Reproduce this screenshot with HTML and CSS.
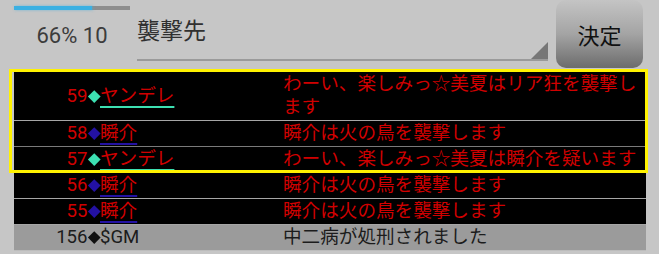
FILE: index.html
```html
<!DOCTYPE html>
<html lang="ja">
<head>
    <meta charset="UTF-8">
    <meta name="viewport" content="width=device-width, initial-scale=1.0">
    <title>襲撃先</title>
    <link rel="stylesheet" href="styles.css">
</head>
<body>
    <div class="top">
        <div class="status">
            <div class="progress"><div class="progress-fill" style="width: 67%"></div></div>
            <div class="count">66% 10</div>
        </div>
        <div class="target">
            <span class="target-text">襲撃先</span>
            <span class="target-arrow"></span>
        </div>
        <button class="decide">決定</button>
    </div>

    <div class="log">
        <div class="focus">
            <div class="row">
                <div class="who"><span class="no">59<i class="mark teal"></i></span><span class="name teal">ヤンデレ</span></div>
                <div class="msg">わーい、楽しみっ☆美夏はリア狂を襲撃します</div>
            </div>
            <div class="row dark-line">
                <div class="who"><span class="no">58<i class="mark blue"></i></span><span class="name blue">瞬介</span></div>
                <div class="msg">瞬介は火の鳥を襲撃します</div>
            </div>
            <div class="row">
                <div class="who"><span class="no">57<i class="mark teal"></i></span><span class="name teal">ヤンデレ</span></div>
                <div class="msg">わーい、楽しみっ☆美夏は瞬介を疑います</div>
            </div>
        </div>
        <div class="row">
            <div class="who"><span class="no">56<i class="mark blue"></i></span><span class="name blue">瞬介</span></div>
            <div class="msg">瞬介は火の鳥を襲撃します</div>
        </div>
        <div class="row">
            <div class="who"><span class="no">55<i class="mark blue"></i></span><span class="name blue">瞬介</span></div>
            <div class="msg">瞬介は火の鳥を襲撃します</div>
        </div>
        <div class="row sys">
            <div class="who"><span class="no">156<i class="mark"></i></span><span>$GM</span></div>
            <div class="msg">中二病が処刑されました</div>
        </div>
    </div>
</body>
</html>
```

FILE: styles.css
```css
body {
    margin: 0;
    background-color: #c6c6c6;
    font-family: Roboto, "Noto Sans CJK JP", sans-serif;
    overflow: hidden;
}
.top {
    display: flex;
    height: 69px;
}
.status {
    width: 116px;
    margin-left: 14px;
    padding-top: 6px;
}
.progress {
    height: 4px;
    background-color: #8e8e8e;
}
.progress-fill {
    height: 100%;
    background-color: #3cb0e2;
    box-shadow: 1px 0 3px rgba(60,176,226,0.6);
}
.count {
    margin-top: 13px;
    font-size: 22px;
    line-height: 26px;
    text-align: center;
    color: #3c3c3c;
}
.target {
    display: flex;
    justify-content: space-between;
    width: 411px;
    height: 59px;
    margin-left: 7px;
    border-bottom: 2px solid #9a9a9a;
}
.target-text {
    padding-top: 18px;
    font-size: 23px;
    line-height: 28px;
    color: #303030;
}
.target-arrow {
    align-self: flex-end;
    width: 0;
    height: 0;
    border-left: 17px solid transparent;
    border-bottom: 17px solid #777;
}
.decide {
    width: 87px;
    height: 68px;
    margin-left: 8px;
    padding: 0;
    border: none;
    border-radius: 10px;
    background: linear-gradient(#c4c4c4, #a4a4a4 50%, #6c6c6c);
    font-family: inherit;
    font-size: 22px;
    color: #111;
}
.log {
    margin: 0 13px 0 14px;
    background-color: #9b9b9b;
}
.focus {
    margin: 0 -2px 0 -5px;
    padding: 3px 2px 0 5px;
    background-color: #c6c6c6;
    outline: 3px solid #fff200;
    outline-offset: -3px;
}
.row {
    display: grid;
    grid-template-columns: 269px 1fr;
    align-items: center;
    padding: 1px 0;
    background-color: #000;
    border-bottom: 1px solid #a6a6a6;
    color: #d00000;
    font-size: 18.6px;
    line-height: 23px;
}
.row.dark-line {
    border-bottom-color: #7a7a7a;
}
.row.sys {
    background-color: #9b9b9b;
    border-bottom-color: #bcbcbc;
    color: #1c1c1c;
}
.who {
    display: flex;
    align-items: center;
}
.no {
    display: inline-flex;
    justify-content: flex-end;
    align-items: center;
    width: 86px;
}
.mark {
    display: inline-block;
    width: 8.5px;
    height: 8.5px;
    margin: 0 2px;
    background-color: #111;
    transform: rotate(45deg);
}
.mark.teal {
    background-color: #3de0b2;
}
.mark.blue {
    background-color: #2311a3;
}
.name {
    text-decoration: underline;
    text-decoration-thickness: 2px;
    text-underline-offset: 4px;
}
.name.teal {
    text-decoration-color: #3de0b2;
}
.name.blue {
    text-decoration-color: #2311a3;
}
.msg {
    align-self: start;
}
```
